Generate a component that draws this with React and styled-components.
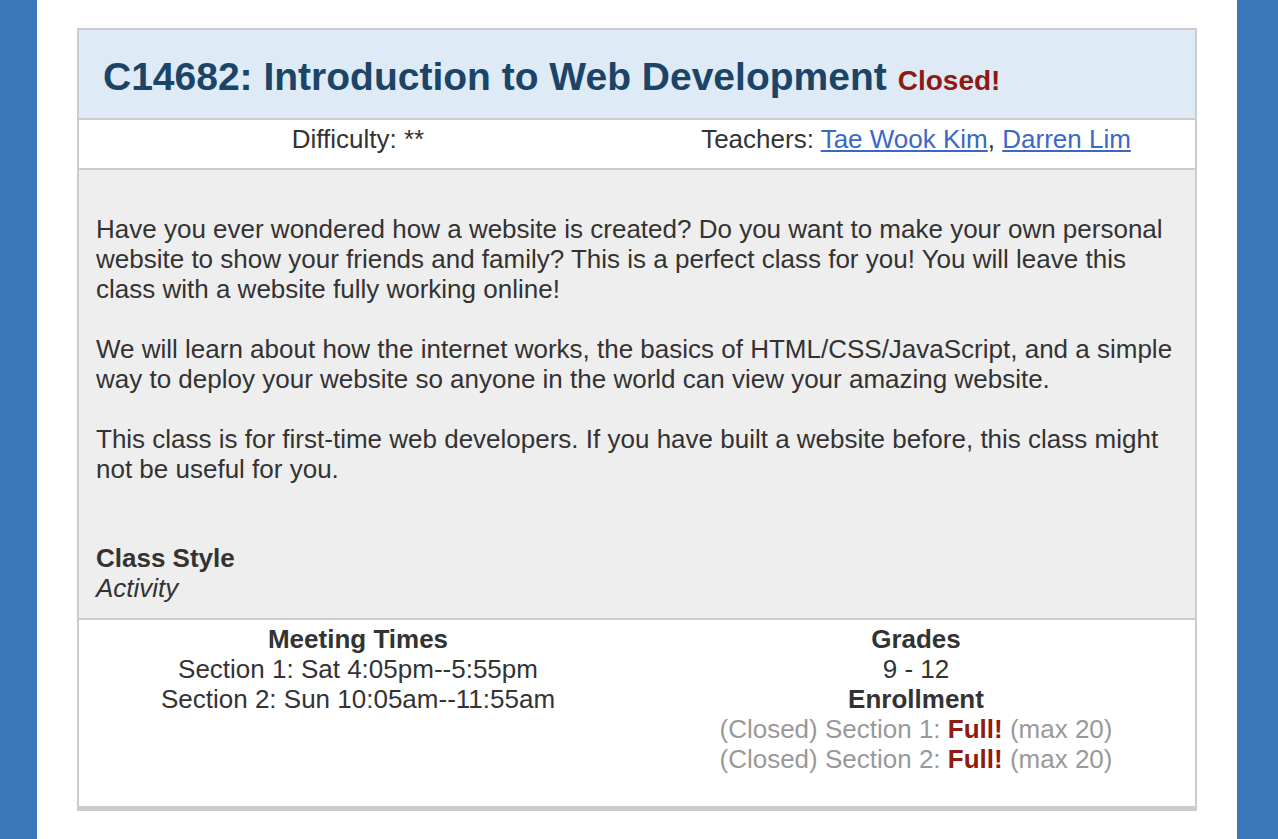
import styled, { createGlobalStyle } from "styled-components";

const GlobalStyle = createGlobalStyle`
  html, body {
    margin: 0;
    padding: 0;
    background: #3a77b9;
  }
  body {
    font-family: "Liberation Sans", Arial, Helvetica, sans-serif;
    color: #333333;
  }
`;

const Page = styled.div`
  margin: 0 41px 0 37px;
  min-height: 839px;
  background: #ffffff;
  padding: 28px 40px 0;
  box-sizing: border-box;
`;

const Card = styled.div`
  border: 2px solid #cccccc;
  border-bottom-width: 3px;
`;

const Header = styled.div`
  background: #deebf7;
  border-bottom: 2px solid #cccccc;
  height: 90px;
  display: flex;
  align-items: center;
  padding: 6px 0 0 24px;
  box-sizing: border-box;
`;

const Title = styled.h1`
  margin: 0;
  font-size: 39px;
  font-weight: 700;
  color: #1b4467;
`;

const Status = styled.span`
  font-size: 28px;
  font-weight: 700;
  color: #8e1a12;
  margin-left: 11px;
`;

const Row = styled.div`
  display: grid;
  grid-template-columns: 1fr 1fr;
  text-align: center;
  font-size: 26px;
  line-height: 30px;
  border-bottom: 2px solid #cccccc;
  padding: ${(p) => p.$padding || "0"};
`;

const InfoRow = styled(Row)`
  height: 50px;
  box-sizing: border-box;
`;

const Link = styled.a`
  color: #3b67c6;
  text-decoration: underline;
`;

const Body = styled.div`
  background: #eeeeee;
  border-bottom: 2px solid #cccccc;
  padding: 44px 17px 15px;
  font-size: 26px;
  line-height: 30px;
`;

const Para = styled.p`
  margin: 0 0 30px;
`;

const StyleBlock = styled.div`
  margin-top: 59px;
`;

const Label = styled.div`
  font-weight: 700;
`;

const Italic = styled.div`
  font-style: italic;
`;

const Column = styled.div`
  display: flex;
  flex-direction: column;
`;

const Muted = styled.div`
  color: #999999;
`;

const Full = styled.span`
  color: #8e1a12;
  font-weight: 700;
`;

export default function App() {
  return (
    <>
      <GlobalStyle />
      <Page>
        <Card>
          <Header>
            <Title>
              C14682: Introduction to Web Development
              <Status>Closed!</Status>
            </Title>
          </Header>
          <InfoRow $padding="4px 0 0">
            <div>Difficulty: **</div>
            <div>
              Teachers: <Link href="#">Tae Wook Kim</Link>,{" "}
              <Link href="#">Darren Lim</Link>
            </div>
          </InfoRow>
          <Body>
            <Para>
              Have you ever wondered how a website is created? Do you want to make
              your own personal website to show your friends and family? This is a
              perfect class for you! You will leave this class with a website fully
              working online!
            </Para>
            <Para>
              We will learn about how the internet works, the basics of
              HTML/CSS/JavaScript, and a simple way to deploy your website so anyone
              in the world can view your amazing website.
            </Para>
            <Para>
              This class is for first-time web developers. If you have built a
              website before, this class might not be useful for you.
            </Para>
            <StyleBlock>
              <Label>Class Style</Label>
              <Italic>Activity</Italic>
            </StyleBlock>
          </Body>
          <Row $padding="4px 0 32px">
            <Column>
              <Label>Meeting Times</Label>
              <div>Section 1: Sat 4:05pm--5:55pm</div>
              <div>Section 2: Sun 10:05am--11:55am</div>
            </Column>
            <Column>
              <Label>Grades</Label>
              <div>9 - 12</div>
              <Label>Enrollment</Label>
              <Muted>
                (Closed) Section 1: <Full>Full!</Full> (max 20)
              </Muted>
              <Muted>
                (Closed) Section 2: <Full>Full!</Full> (max 20)
              </Muted>
            </Column>
          </Row>
        </Card>
      </Page>
    </>
  );
}
